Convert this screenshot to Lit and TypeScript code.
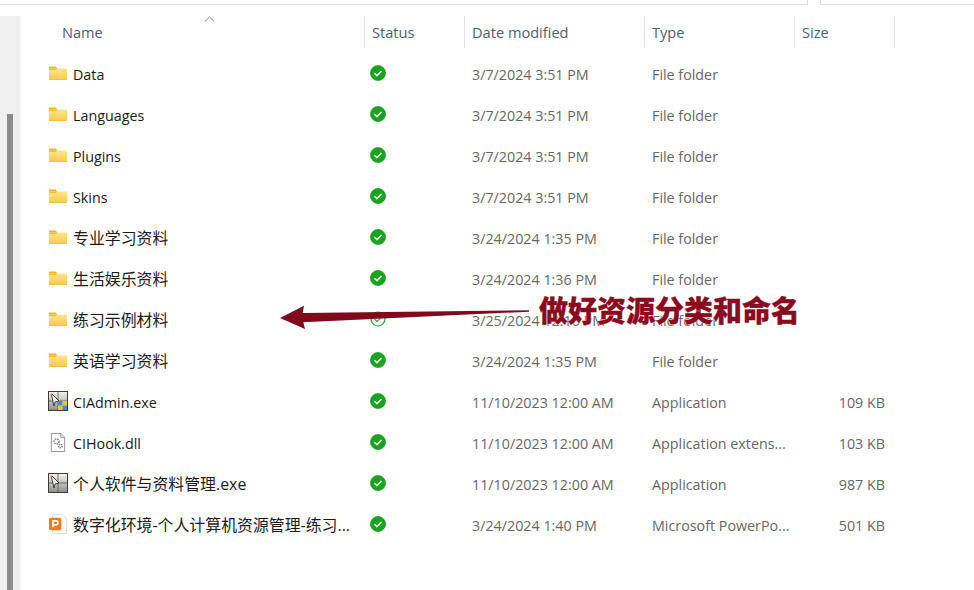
import { LitElement, html, css, svg } from "lit";
import { customElement } from "lit/decorators.js";

type Kind = "folder" | "exe" | "app" | "dll" | "ppt";
interface Row { name: string; date: string; type: string; size: string; kind: Kind; cjk?: boolean; }

const F = "File folder";
const rows: Row[] = [
  { name: "Data", date: "3/7/2024 3:51 PM", type: F, size: "", kind: "folder" },
  { name: "Languages", date: "3/7/2024 3:51 PM", type: F, size: "", kind: "folder" },
  { name: "Plugins", date: "3/7/2024 3:51 PM", type: F, size: "", kind: "folder" },
  { name: "Skins", date: "3/7/2024 3:51 PM", type: F, size: "", kind: "folder" },
  { name: "专业学习资料", date: "3/24/2024 1:35 PM", type: F, size: "", kind: "folder", cjk: true },
  { name: "生活娱乐资料", date: "3/24/2024 1:36 PM", type: F, size: "", kind: "folder", cjk: true },
  { name: "练习示例材料", date: "3/25/2024 12:16 PM", type: F, size: "", kind: "folder", cjk: true },
  { name: "英语学习资料", date: "3/24/2024 1:35 PM", type: F, size: "", kind: "folder", cjk: true },
  { name: "CIAdmin.exe", date: "11/10/2023 12:00 AM", type: "Application", size: "109 KB", kind: "exe" },
  { name: "CIHook.dll", date: "11/10/2023 12:00 AM", type: "Application extens...", size: "103 KB", kind: "dll" },
  { name: "个人软件与资料管理.exe", date: "11/10/2023 12:00 AM", type: "Application", size: "987 KB", kind: "app", cjk: true },
  { name: "数字化环境-个人计算机资源管理-练习...", date: "3/24/2024 1:40 PM", type: "Microsoft PowerPo...", size: "501 KB", kind: "ppt", cjk: true },
];

const exeBase = svg`
  <rect x=".5" y=".5" width="19" height="19" fill="url(#eg)" stroke="#3c3c3c"/>
  <path d="M10 1v18M1 10h18" stroke="#555" stroke-width=".8"/>
  <path d="M3 2l8 8-4 1-1 4z" fill="#f2f2f2" stroke="#333" stroke-width=".9"/>
  <path d="M2 2h3L2 5z" fill="#f4cf3a"/>`;
const exeDefs = svg`<defs><linearGradient id="eg" x1="0" y1="0" x2="0" y2="1"><stop offset="0" stop-color="#f4f4f0"/><stop offset="1" stop-color="#8d8d8a"/></linearGradient></defs>`;

const icons: Record<Kind, unknown> = {
  folder: svg`<svg class="ico" width="20" height="20" viewBox="0 0 20 20">
    <defs><linearGradient id="fg" x1="0" y1="0" x2="0" y2="1"><stop offset="0" stop-color="#ffe58c"/><stop offset="1" stop-color="#fcc94f"/></linearGradient></defs>
    <path d="M1 3.5h6.5l2 2H1z" fill="#f5b21e"/>
    <path d="M1 5.5h18v11.2H1z" fill="url(#fg)"/>
    <path d="M1 5.5h8.5l-1.6 1.4H1z" fill="#f7bb2d"/>
    <path d="M1 16.2h18v.6H1z" fill="#e9ac2c"/></svg>`,
  exe: svg`<svg class="ico" width="20" height="20" viewBox="0 0 20 20">${exeDefs}${exeBase}
    <rect x="10" y="10" width="4.5" height="4.5" fill="#3d8fd0"/><rect x="14.5" y="14.5" width="4.5" height="4.5" fill="#3d8fd0"/>
    <rect x="14.5" y="10" width="4.5" height="4.5" fill="#eec52f"/><rect x="10" y="14.5" width="4.5" height="4.5" fill="#eec52f"/></svg>`,
  app: svg`<svg class="ico" width="20" height="20" viewBox="0 0 20 20">${exeDefs}${exeBase}</svg>`,
  dll: svg`<svg class="ico" width="20" height="20" viewBox="0 0 21 21">
    <path d="M3.5 1.5h10l4 4v15h-14z" fill="#fff" stroke="#8f8f8f"/>
    <path d="M13.5 1.5v4h4" fill="#eee" stroke="#8f8f8f"/>
    <circle cx="9" cy="10" r="2.6" fill="none" stroke="#8a8f96" stroke-width="1.8" stroke-dasharray="1.6 .9"/>
    <circle cx="13" cy="14.8" r="1.8" fill="none" stroke="#777c84" stroke-width="1.6" stroke-dasharray="1.3 .7"/></svg>`,
  ppt: svg`<svg class="ico" width="20" height="20" viewBox="0 0 21 21">
    <path d="M4.5 .5h11l4 4v16h-15z" fill="#fdfdfd" stroke="#d5dbe3"/>
    <rect x="1" y="4" width="13" height="13" rx="2" fill="#f07d1a"/>
    <path d="M5.3 14V7.2h3a2.1 2.1 0 0 1 0 4.2h-3" fill="none" stroke="#fff" stroke-width="1.7"/></svg>`,
};

const check = svg`<svg class="status" width="18" height="18" viewBox="0 0 18 18">
  <circle cx="9" cy="9" r="7.6" fill="#17a51d" stroke="#128c1a" stroke-width=".6"/>
  <path d="M5.4 9.2l2.5 2.4 4.6-4.6" fill="none" stroke="#fff" stroke-width="1.5"/></svg>`;

const ringCheck = svg`<svg class="status" width="18" height="18" viewBox="0 0 18 18">
  <circle cx="9" cy="9" r="7" fill="#fff" stroke="#2aa447" stroke-width="1.2"/>
  <path d="M5.6 9.2l2.4 2.3 4.4-4.4" fill="none" stroke="#2aa447" stroke-width="1.2"/></svg>`;

@customElement("app-root")
export class AppRoot extends LitElement {
  static styles = css`
    :host {
      display: block;
      position: relative;
      width: 974px;
      height: 590px;
      overflow: hidden;
      background: #fff;
      font-family: "Open Sans", "Noto Sans CJK SC", sans-serif;
      font-size: 14.3px;
    }
    .top { display: flex; height: 16px; }
    .tab { height: 4px; border-bottom: 1px solid #dcdcdc; box-sizing: content-box; }
    .tab.a { width: 807px; border-right: 1px solid #dcdcdc; }
    .tab.b { flex: 1; margin-left: 12px; border-left: 1px solid #dcdcdc; }
    .body { display: flex; height: 574px; }
    .side {
      width: 20px;
      background: #f0f0f0;
      border-right: 2px solid #f8f8f8;
      box-sizing: content-box;
      padding-top: 98px;
    }
    .thumb { width: 6px; height: 100%; margin-left: 7px; background: #8c8c8c; }
    .main { width: 952px; }
    .grid {
      display: grid;
      grid-template-columns: 343px 100px 180px 150px 100px;
      align-items: center;
    }
    .head { height: 32px; }
    .hc {
      height: 32px;
      line-height: 32px;
      padding-left: 7px;
      border-right: 1px solid #e5e5e5;
      box-sizing: border-box;
      color: #4c607a;
      font-size: 14.6px;
      position: relative;
      white-space: nowrap;
    }
    .hc.name { padding-left: 40px; }
    .sort { position: absolute; left: 182px; top: 0; }
    .row { height: 41px; }
    .list { padding-top: 5px; }
    .cell { white-space: nowrap; padding: 2px 0 0 7px; color: #676767; }
    .cell.n {
      padding: 0 0 0 26px;
      color: #1a1a1a;
      display: flex;
      align-items: center;
      gap: 5px;
      overflow: hidden;
    }
    .nm { padding-top: 2px; }
    .nm.cjk { font-size: 15.9px; padding-top: 0; }
    .cell.st { display: flex; align-items: center; padding: 0 0 0 4px; }
    .cell.sz { text-align: right; padding: 2px 10px 0 0; }
    .ico { flex: none; display: block; margin-top: -2px; }
    .status { display: block; margin-top: -2px; }
    .overlay { position: absolute; left: 0; top: 0; pointer-events: none; }
    .label {
      position: absolute;
      left: 539px;
      top: 288px;
      font-family: "Noto Sans CJK SC", sans-serif;
      font-weight: 900;
      font-size: 29px;
      line-height: 42px;
      color: #8a0a1e;
      white-space: nowrap;
      -webkit-text-stroke: 0.3px #8a0a1e;
      text-shadow: 0 0 1px #fff, 0 0 2px #fff;
    }
  `;

  render() {
    return html`
      <div class="top"><div class="tab a"></div><div class="tab b"></div></div>
      <div class="body">
        <div class="side"><div class="thumb"></div></div>
        <div class="main">
          <div class="grid head">
            <div class="hc name">Name
              <svg class="sort" width="11" height="7" viewBox="0 0 11 7"><path d="M.8 5.6L5.5 1l4.7 4.6" fill="none" stroke="#8a8a8a"/></svg>
            </div>
            <div class="hc">Status</div>
            <div class="hc">Date modified</div>
            <div class="hc">Type</div>
            <div class="hc">Size</div>
          </div>
          <div class="list">
            ${rows.map((r, i) => html`
              <div class="grid row">
                <div class="cell n">${icons[r.kind]}<span class="nm ${r.cjk ? "cjk" : ""}">${r.name}</span></div>
                <div class="cell st">${i === 6 ? ringCheck : check}</div>
                <div class="cell">${r.date}</div>
                <div class="cell">${r.type}</div>
                <div class="cell sz">${r.size}</div>
              </div>`)}
          </div>
        </div>
      </div>
      <svg class="overlay" width="974" height="590" viewBox="0 0 974 590">
        <path d="M280 318L304 305.7L302.7 313L529 310.3V311.7L303.3 322.3L305 329Z" fill="#7f0a1e"/>
      </svg>
      <div class="label">做好资源分类和命名</div>
    `;
  }
}
